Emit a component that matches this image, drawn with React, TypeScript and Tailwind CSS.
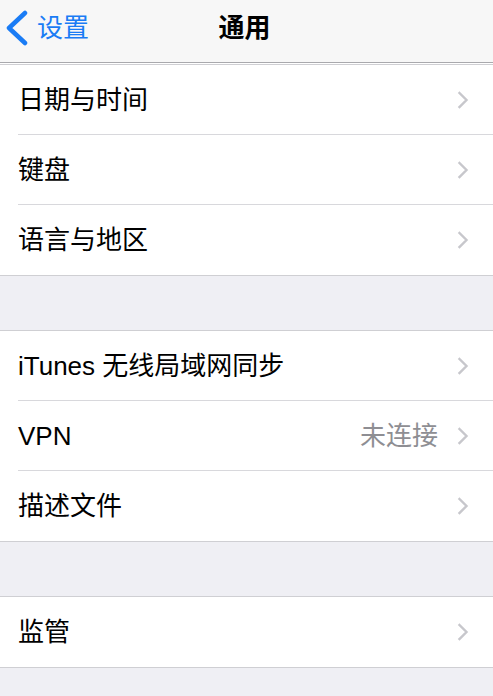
import React from "react";

const font = { fontFamily: '"Liberation Sans", "Noto Sans CJK SC", sans-serif' };

function Chevron() {
  return (
    <svg width="12" height="18" viewBox="0 0 12 18" className="shrink-0">
      <path d="M2.5 2 L9.5 9 L2.5 16" fill="none" stroke="#c7c7cc" strokeWidth="2.4" strokeLinecap="square" />
    </svg>
  );
}

function Row({ label, value, last }: { label: string; value?: string; last?: boolean }) {
  return (
    <div className="bg-white pl-[18px]">
      <div className={`flex h-[70px] items-center pr-[24px] ${last ? "" : "border-b border-[#d8d8dc]"}`}>
        <span className="flex-1 text-[26px] text-black leading-none">{label}</span>
        {value && <span className="mr-[19px] text-[26px] leading-none text-[#8e8e93]">{value}</span>}
        <Chevron />
      </div>
    </div>
  );
}

function Group({ items }: { items: { label: string; value?: string }[] }) {
  return (
    <div className="border-y border-[#cfcfd3]">
      {items.map((it, i) => (
        <Row key={it.label} label={it.label} value={it.value} last={i === items.length - 1} />
      ))}
    </div>
  );
}

export default function App() {
  return (
    <div className="h-[696px] w-[493px] overflow-hidden bg-[#efeff4]" style={font}>
      <div className="relative flex h-[63px] items-center justify-center border-b border-[#a9a9ad] bg-[#f7f7f7]">
        <div className="absolute left-[4px] top-0 flex h-[56px] items-center">
          <svg width="26" height="36" viewBox="0 0 26 36">
            <path d="M21 3 L5 18 L21 33" fill="none" stroke="#1a7cf5" strokeWidth="4.5" strokeLinecap="round" strokeLinejoin="round" />
          </svg>
          <span className="ml-[7px] text-[26px] leading-none text-[#1a7cf5]">设置</span>
        </div>
        <span className="-ml-[4px] -mt-[7px] text-[26px] font-semibold leading-none text-black">通用</span>
      </div>
      <div className="h-[1px] bg-white" />
      <Group items={[{ label: "日期与时间" }, { label: "键盘" }, { label: "语言与地区" }]} />
      <div className="h-[54px]" />
      <Group items={[{ label: "iTunes 无线局域网同步" }, { label: "VPN", value: "未连接" }, { label: "描述文件" }]} />
      <div className="h-[54px]" />
      <Group items={[{ label: "监管" }]} />
    </div>
  );
}
